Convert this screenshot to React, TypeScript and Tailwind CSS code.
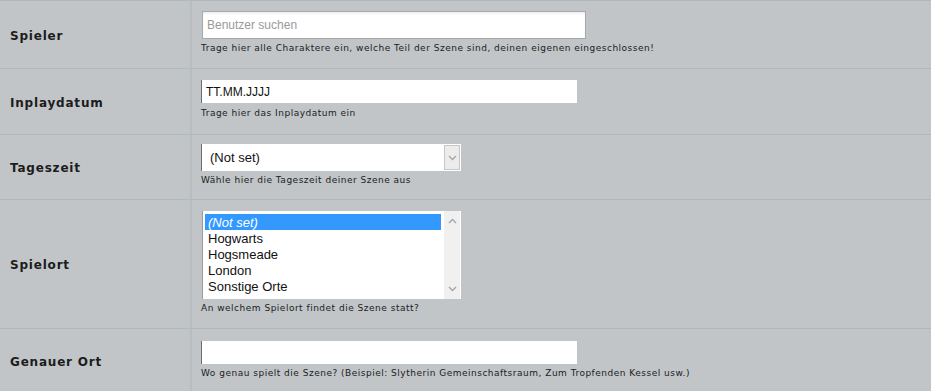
const label = "text-[12px] font-bold tracking-[0.8px] text-[#1c1c1c] font-['DejaVu_Sans',Verdana,sans-serif]";
const desc = "text-[9px] leading-[12px] tracking-[0.5px] text-[#1c1c1c] font-['DejaVu_Sans',Verdana,sans-serif]";

function Row({ title, children, pad }: { title: string; children: React.ReactNode; pad: string }) {
  return (
    <div className="flex border-t border-[#b3b8bb]">
      <div className="w-[192px] shrink-0 flex items-center pl-[10px] pt-[2px] border-r-2 border-[#b8bdc0]">
        <span className={label}>{title}</span>
      </div>
      <div className={`flex-1 pl-[9px] ${pad}`}>{children}</div>
    </div>
  );
}

function Chevron({ up = false }: { up?: boolean }) {
  return (
    <svg width="9" height="6" viewBox="0 0 9 6" className={up ? "rotate-180" : ""}>
      <path d="M1 1l3.5 3.5L8 1" stroke="#a6a6a6" strokeWidth="1.4" fill="none" />
    </svg>
  );
}

export default function App() {
  const orte = ["(Not set)", "Hogwarts", "Hogsmeade", "London", "Sonstige Orte"];

  return (
    <div className="w-[931px] h-[391px] overflow-hidden bg-[#c1c5c8]">
      {/* Spieler */}
      <Row title="Spieler" pad="pt-[10px] pb-[14px]">
        <div className="ml-[1px] w-[384px] h-[28px] bg-white border border-[#a9a9a9] shadow-[inset_0_2px_2px_rgba(0,0,0,0.06)] flex items-center pl-[4px]">
          <span className="text-[12px] text-[#9a9a9a] font-['Liberation_Sans',Arial,sans-serif]">Benutzer suchen</span>
        </div>
        <p className={`${desc} mt-[3px]`}>Trage hier alle Charaktere ein, welche Teil der Szene sind, deinen eigenen eingeschlossen!</p>
      </Row>

      {/* Inplaydatum */}
      <Row title="Inplaydatum" pad="pt-[11px] pb-[15px]">
        <div className="w-[376px] h-[23px] bg-white border-l border-[#6e6e6e] flex items-center pl-[4px]">
          <span className="text-[12px] text-[#111] font-['Liberation_Sans',Arial,sans-serif]">TT.MM.JJJJ</span>
        </div>
        <p className={`${desc} mt-[4px]`}>Trage hier das Inplaydatum ein</p>
      </Row>

      {/* Tageszeit */}
      <Row title="Tageszeit" pad="pt-[9px] pb-[13px]">
        <div className="w-[260px] h-[27px] bg-white border-l border-[#6e6e6e] flex items-center">
          <span className="flex-1 pl-[8px] text-[13px] text-[#111] font-['Liberation_Sans',Arial,sans-serif]">(Not set)</span>
          <div className="w-[16px] h-[25px] mr-[1px] bg-[#ececec] border border-[#c6c6c6] flex items-center justify-center">
            <Chevron />
          </div>
        </div>
        <p className={`${desc} mt-[3px]`}>Wähle hier die Tageszeit deiner Szene aus</p>
      </Row>

      {/* Spielort */}
      <Row title="Spielort" pad="pt-[11px] pb-[14px]">
        <div className="ml-[1px] w-[259px] h-[88px] bg-white border-l border-[#9a9a9a] flex">
          <div className="flex-1 pt-[3px] pl-[2px] pr-[3px]">
            {orte.map((o, i) => (
              <div
                key={o}
                className={`h-[16px] leading-[17px] pl-[3px] text-[13px] font-['Liberation_Sans',Arial,sans-serif] ${
                  i === 0 ? "bg-[#3399ff] text-white italic" : "text-[#111]"
                }`}
              >
                {o}
              </div>
            ))}
          </div>
          <div className="w-[16px] mr-[1px] bg-[#f0f0f0] flex flex-col items-center justify-between py-[7px]">
            <Chevron up />
            <Chevron />
          </div>
        </div>
        <p className={`${desc} mt-[3px]`}>An welchem Spielort findet die Szene statt?</p>
      </Row>

      {/* Genauer Ort */}
      <Row title="Genauer Ort" pad="pt-[12px] pb-[14px]">
        <div className="w-[376px] h-[23px] bg-white border-l border-[#6e6e6e]" />
        <p className={`${desc} mt-[3px]`}>Wo genau spielt die Szene? (Beispiel: Slytherin Gemeinschaftsraum, Zum Tropfenden Kessel usw.)</p>
      </Row>
    </div>
  );
}
